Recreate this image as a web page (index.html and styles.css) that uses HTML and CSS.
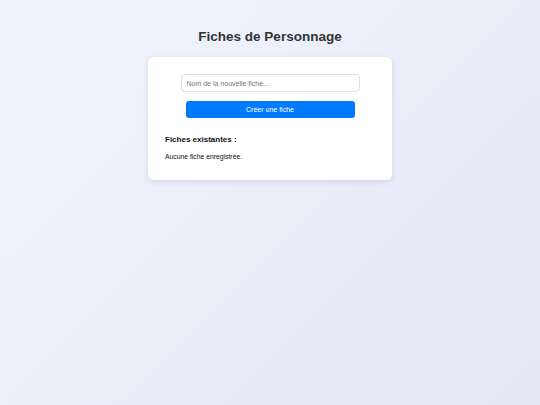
FILE: index.html
```html
<!DOCTYPE html>
<html lang="fr">
<head>
    <meta charset="UTF-8">
    <meta name="viewport" content="width=device-width, initial-scale=1.0">
    <title>Fiches de Personnage</title>
    <link rel="stylesheet" href="styles.css">
</head>
<body>
    <h1>Fiches de Personnage</h1>

    <div class="card">
        <div class="create">
            <input type="text" id="newName" placeholder="Nom de la nouvelle fiche...">
            <button id="createBtn">Créer une fiche</button>
        </div>

        <h3>Fiches existantes :</h3>
        <p class="empty">Aucune fiche enregistrée.</p>
    </div>
</body>
</html>
```

FILE: styles.css
```css
html {
    min-height: 100%;
}
body {
    font-family: "Liberation Sans", Arial, sans-serif;
    background: linear-gradient(135deg, #f1f4fe 0%, #e2e9f5 100%);
    min-height: 100vh;
    margin: 0;
    padding-top: 28px;
    box-sizing: border-box;
    display: flex;
    flex-direction: column;
    align-items: center;
}
h1 {
    font-size: 13.5px;
    line-height: 17px;
    color: #333;
    margin: 0 0 12px 0;
}
.card {
    background-color: #ffffff;
    width: 244px;
    box-sizing: border-box;
    padding: 17px 17px 19px 17px;
    border-radius: 6px;
    box-shadow: 0 2px 6px rgba(0, 0, 0, 0.1);
}
.create {
    display: flex;
    flex-direction: column;
    align-items: center;
    gap: 9px;
}
input {
    width: 179px;
    height: 18px;
    box-sizing: border-box;
    padding: 0 5px;
    font-family: inherit;
    font-size: 7px;
    border: 1px solid #ddd;
    border-radius: 4px;
    outline: none;
}
input::placeholder {
    color: #777;
}
button {
    width: 169px;
    height: 17px;
    font-family: inherit;
    font-size: 7px;
    color: #fff;
    background-color: #007bff;
    border: none;
    border-radius: 3px;
    cursor: pointer;
}
h3 {
    font-size: 8px;
    line-height: 10px;
    color: #111;
    margin: 17px 0 0 0;
}
.empty {
    font-size: 6.8px;
    line-height: 8px;
    color: #111;
    margin: 8px 0 0 0;
}
```
